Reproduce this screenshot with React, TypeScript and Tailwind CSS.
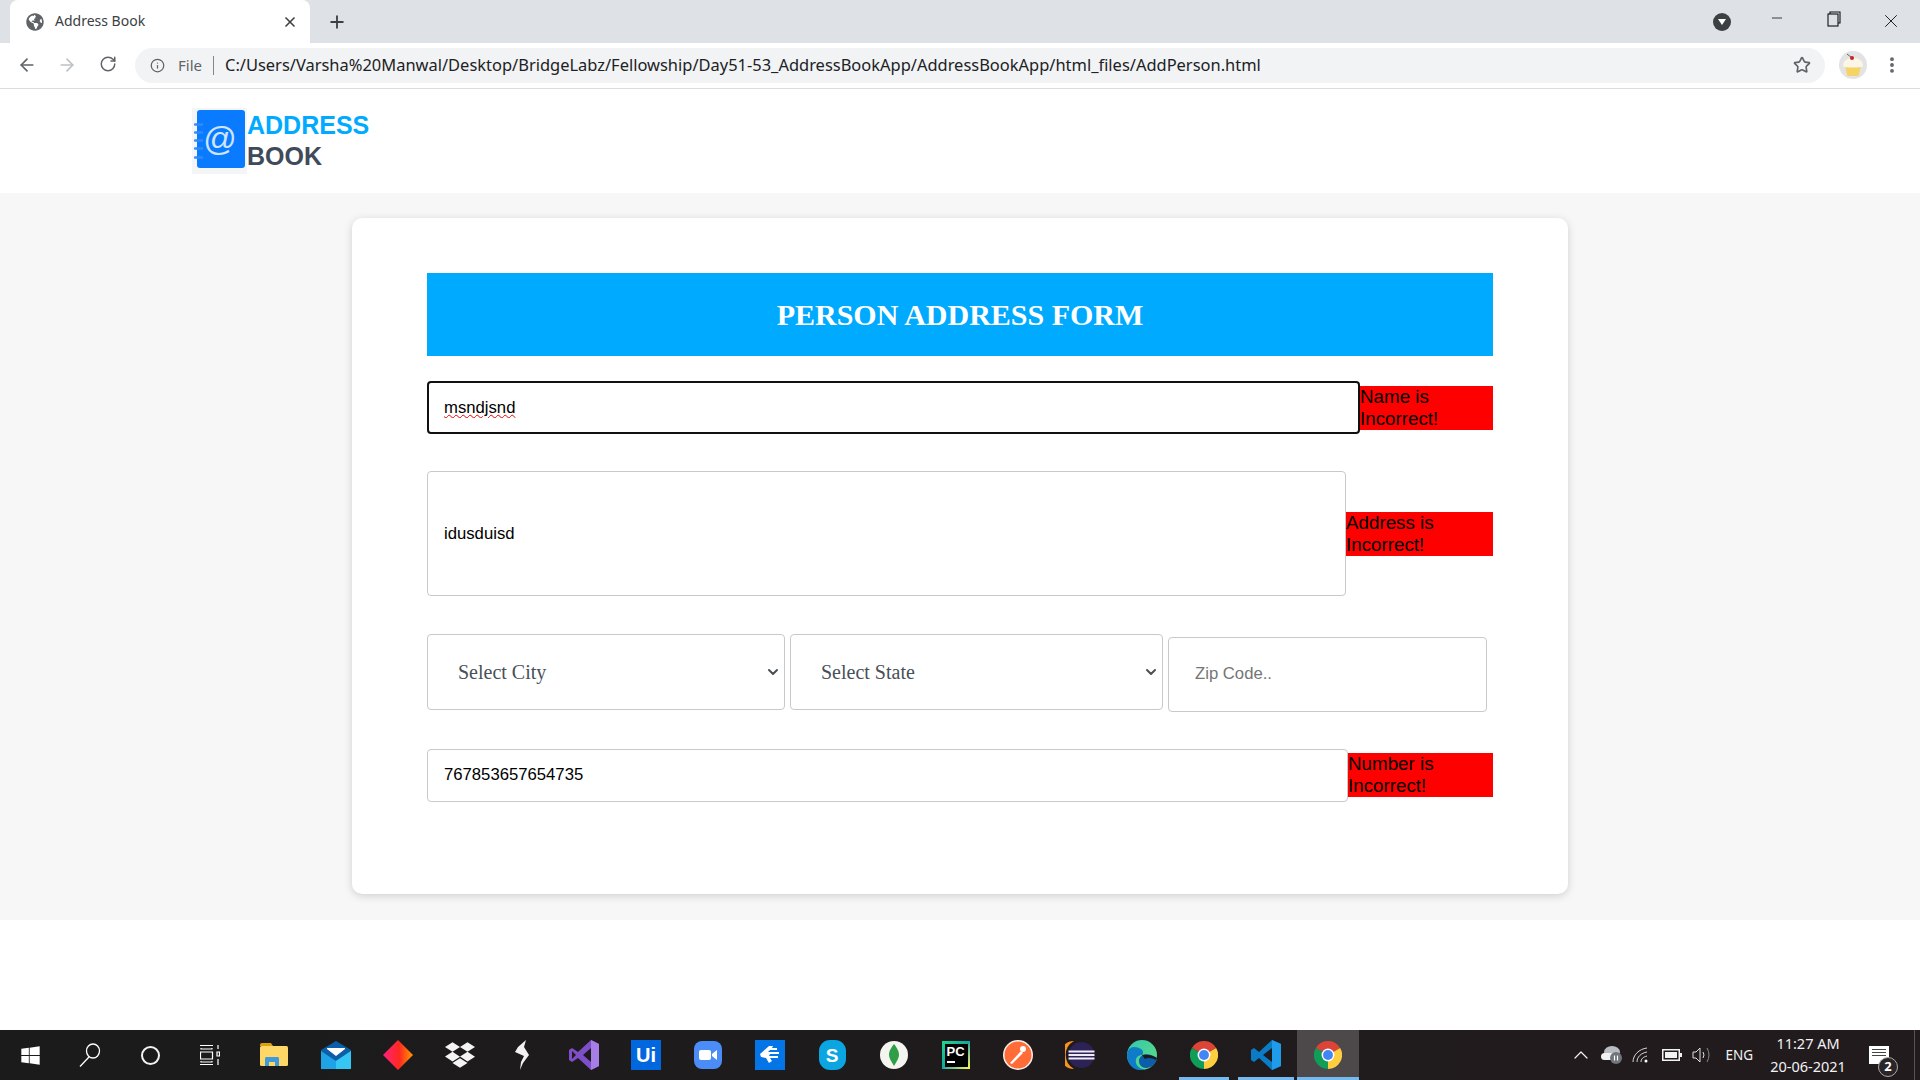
import { ArrowLeft, ArrowRight, ChevronDown, ChevronUp, EllipsisVertical, Info, Minus, Plus, RotateCw, Star, X } from 'lucide-react'
import { FaDropbox, FaGlobeAmericas, FaWindows } from 'react-icons/fa'

const arial = 'font-["Liberation_Sans",Arial,sans-serif]'

function ChromeLogo() {
  return (
    <svg width="28" height="28" viewBox="0 0 48 48">
      <path d="M24 24 L44.8 12 A24 24 0 0 0 3.2 12 Z" fill="#db4437" />
      <path d="M24 24 L3.2 12 A24 24 0 0 0 24 48 Z" fill="#0f9d58" />
      <path d="M24 24 L24 48 A24 24 0 0 0 44.8 12 Z" fill="#ffcd40" />
      <circle cx="24" cy="24" r="11" fill="#fff" />
      <circle cx="24" cy="24" r="8.5" fill="#4285f4" />
    </svg>
  )
}

function Logo() {
  return (
    <div className="relative h-[66px] w-[55px] bg-[#f4f5f6]">
      <div className={`absolute top-[2px] left-[5px] flex h-[58px] w-[48px] items-center justify-center rounded-[3px] bg-[#0a7bff] pr-[2px] text-[33px] text-[#cfe5ff] ${arial}`}>@</div>
      <svg width="9" height="36" viewBox="0 0 9 36" className="absolute top-[15px] left-[2px]">
        <path d="M1 1.500h8M1 9.500h8M1 17.500h8M1 25.500h8M1 34.500h8" stroke="#2f8cf5" strokeWidth="2.4" strokeLinecap="round" />
      </svg>
    </div>
  )
}

function Cupcake() {
  return (
    <svg width="28" height="28" viewBox="0 0 28 28" className="block">
      <circle cx="14" cy="14" r="14" fill="#e3e3e3" />
      <path d="M6 15h16l-2.500 10h-11z" fill="#f5d365" />
      <path d="M4 15c0-5 4-8 10-8s10 3 10 8c0 2-20 2-20 0z" fill="#fbf6e8" />
      <circle cx="13" cy="7" r="2" fill="#c8202c" />
      <path d="M12 6 8 3" stroke="#666" strokeWidth="1" />
    </svg>
  )
}

function Folder() {
  return (
    <svg width="28" height="24" viewBox="0 0 28 24">
      <path d="M0 2q0-2 2-2h9l2 3H0z" fill="#d9a112" />
      <rect y="3" width="28" height="20" rx="1.5" fill="#ffd766" />
      <path d="M5 23v-8l1-1h12l1 1v8h-4v-4H9v4z" fill="#3f9ad8" />
    </svg>
  )
}

function Mail() {
  return (
    <svg width="30" height="28" viewBox="0 0 30 28">
      <path d="M0 9 15 0l15 9v19H0z" fill="#0b5fa8" />
      <path d="M0 10l15 10 15-10v18H0z" fill="#1ea4e6" />
      <path d="M15 20 30 10v18H15z" fill="#35c6f4" />
      <path d="M6 7h18v1l-9 7-9-7z" fill="#fff" />
    </svg>
  )
}

function Diamond() {
  return (
    <svg width="30" height="30" viewBox="0 0 30 30">
      <defs>
        <linearGradient id="dm" x1="0" x2="1" y1="0" y2="0">
          <stop offset="0" stopColor="#ff1f7d" />
          <stop offset="0.55" stopColor="#ff2a1f" />
          <stop offset="1" stopColor="#ff9a00" />
        </linearGradient>
      </defs>
      <path d="M15 0 30 15 15 30 0 15z" fill="url(#dm)" />
    </svg>
  )
}

function Slash() {
  return (
    <svg width="14" height="30" viewBox="0 0 14 30">
      <path d="M11 0 9 7l5 8-6 8-3 7 1-8 3-6-9-4 3-5z" fill="#f2f2f2" />
    </svg>
  )
}

function VisualStudio() {
  return (
    <svg width="30" height="30" viewBox="0 0 30 30">
      <path d="M22 0 30 4v22l-8 4-13-12-6 4-3-2V10l3-2 6 4z" fill="#7f4fc9" />
      <path d="M22 8 14 15l8 7z" fill="#1e1a1d" />
      <path d="M3 11v8l4-4z" fill="#1e1a1d" />
      <path d="M22 0 30 4v22l-8 4z" fill="#a77ee6" />
    </svg>
  )
}

function ZoomApp() {
  return (
    <svg width="28" height="28" viewBox="0 0 28 28">
      <rect width="28" height="28" rx="8" fill="#4b8cf7" />
      <rect x="5" y="9" width="12" height="10" rx="2" fill="#fff" />
      <path d="M18 13l5-4v10l-5-4z" fill="#fff" />
    </svg>
  )
}

function Kite() {
  return (
    <svg width="30" height="30" viewBox="0 0 30 30">
      <rect width="30" height="30" fill="#0475e6" />
      <path d="M5 14 14 6h4l-1 2h5v2h-7l-2 2h11v2h-9l-1 2h9v2h-8l2 3-3 2-3-5-5-1z" fill="#fff" />
    </svg>
  )
}

function Skype() {
  return (
    <div className={`flex h-[30px] w-[27px] items-center justify-center rounded-[11px] bg-[#0ba6e2] text-[19px] leading-none font-bold text-white ${arial}`}>S</div>
  )
}

function Mongo() {
  return (
    <svg width="28" height="28" viewBox="0 0 28 28">
      <circle cx="14" cy="14" r="14" fill="#f5f5f0" />
      <path d="M14 3c4 5 5 8 5 11s-2 6-5 11c-3-5-5-8-5-11s1-6 5-11z" fill="#2f9e46" />
    </svg>
  )
}

function PyCharm() {
  return (
    <div className="relative h-7 w-7 bg-gradient-to-br from-[#21d789] via-[#15a5a0] to-[#fcf84a] p-[2.5px]">
      <div className={`h-full w-full bg-black pl-[2px] text-[13px] leading-[15px] font-bold text-white ${arial}`}>
        PC
        <div className="mt-[2px] h-[2px] w-[8px] bg-white" />
      </div>
    </div>
  )
}

function Postman() {
  return (
    <svg width="30" height="30" viewBox="0 0 30 30">
      <circle cx="15" cy="15" r="15" fill="#f5f0ec" />
      <circle cx="15" cy="15" r="13.5" fill="#ff6c37" />
      <path d="M7 23 18 11l2 2L9 24z" fill="#fff" />
      <circle cx="20" cy="9" r="3" fill="#fff" />
    </svg>
  )
}

function Eclipse() {
  return (
    <svg width="30" height="30" viewBox="0 0 30 30">
      <path d="M9 1A14 14 0 0 0 9 29 16 16 0 0 1 9 1z" fill="#f7941e" />
      <circle cx="16.5" cy="15" r="13" fill="#2c2255" />
      <path d="M3.5 10.5h26v2h-26zM3.5 14h26v2h-26zM3.5 17.500h26v2h-26z" fill="#eeeaf6" />
    </svg>
  )
}

function Edge() {
  return (
    <svg width="30" height="30" viewBox="0 0 30 30">
      <defs>
        <linearGradient id="eg" x1="0" x2="1" y1="0" y2="1">
          <stop offset="0" stopColor="#34c6b0" />
          <stop offset="1" stopColor="#5fe07c" />
        </linearGradient>
      </defs>
      <circle cx="15" cy="15" r="15" fill="url(#eg)" />
      <path d="M0 15C1 5 9 6 14 9c3 2 2 5 1 6-4 0-7 3-6 8 1 4 6 7 11 6C9 33 0 26 0 15z" fill="#0f7cc8" />
      <path d="M12 21c0-5 6-8 12-6 4 1 6 3 6 4-2 7-8 9-11 9-4 0-7-3-7-7z" fill="#0c5ea8" />
      <path d="M15 15c5-1 10 0 15 3l-1 2c-3-2-8-3-11-1z" fill="#1d1a1c" />
    </svg>
  )
}

function VsCode() {
  return (
    <svg width="30" height="30" viewBox="0 0 30 30">
      <path d="M21 0 30 4v22l-9 4L8 18l-5 4-3-2v-10l3-2 5 4z" fill="#0a7cc6" />
      <path d="M21 8 12 15l9 7z" fill="#1e1a1d" />
      <path d="M21 0 30 4v22l-9 4z" fill="#1e9bea" />
    </svg>
  )
}

const apps = [
  { key: 'explorer', icon: <Folder /> },
  { key: 'mail', icon: <Mail /> },
  { key: 'diamond', icon: <Diamond /> },
  { key: 'dropbox', icon: <FaDropbox size={30} color="#f4f4f4" /> },
  { key: 'slash', icon: <Slash /> },
  { key: 'vs', icon: <VisualStudio /> },
  { key: 'ui', icon: <div className={`flex h-[30px] w-[30px] items-center justify-center bg-[#0067df] text-[20px] font-bold text-white ${arial}`}>Ui</div> },
  { key: 'zoom', icon: <ZoomApp /> },
  { key: 'kite', icon: <Kite /> },
  { key: 'skype', icon: <Skype /> },
  { key: 'mongo', icon: <Mongo /> },
  { key: 'pycharm', icon: <PyCharm /> },
  { key: 'postman', icon: <Postman /> },
  { key: 'eclipse', icon: <Eclipse /> },
  { key: 'edge', icon: <Edge /> },
  { key: 'chrome', icon: <ChromeLogo />, line: 'mx-[6px] bg-[#76b9ed]' },
  { key: 'vscode', icon: <VsCode />, line: 'mx-[3px] bg-[#76b9ed]' },
  { key: 'chrome-active', icon: <ChromeLogo />, line: 'bg-[#76b9ed]', active: true },
]

function BrowserBar() {
  return (
    <div className="shrink-0 font-['Noto_Sans',sans-serif]">
      <div className="flex h-[43px] items-end bg-[#dee1e6] pl-[10px]">
        <div className="flex h-[43px] w-[300px] items-center rounded-t-[8px] bg-white pr-[12px] pl-[16px]">
          <FaGlobeAmericas size={18} color="#5f6368" />
          <span className="ml-[11px] flex-1 pb-[2px] text-[14px] text-[#3c4043]">Address Book</span>
          <X size={16} strokeWidth={2.5} color="#3c4043" />
        </div>
        <div className="ml-[17px] flex h-[43px] items-center">
          <Plus size={20} strokeWidth={2.2} color="#3c4043" />
        </div>
        <div className="ml-auto flex h-[43px] items-start pr-[1px]">
          <div className="mt-[13px] mr-[17px] flex h-[18px] w-[18px] items-center justify-center rounded-full bg-[#3c4043]">
            <div className="h-0 w-0 border-x-[4px] border-t-[6px] border-x-transparent border-t-white" />
          </div>
          <div className="flex w-[57px] justify-center pt-[10px]"><Minus size={16} strokeWidth={1.2} color="#111" /></div>
          <div className="flex w-[57px] justify-center pt-[11px]">
            <svg width="14" height="16" viewBox="0 0 14 16" fill="none" stroke="#111" strokeWidth="1.1">
              <rect x="1" y="3" width="10" height="12" />
              <path d="M3 3V1h10v11h-2" />
            </svg>
          </div>
          <div className="flex w-[57px] justify-center pt-[10px]"><X size={22} strokeWidth={1} color="#111" /></div>
        </div>
      </div>
      <div className="flex h-[46px] items-center border-b border-[#dcdcdc] bg-white pb-[1px]">
        <div className="flex w-[135px] pl-[17px]">
          <ArrowLeft size={20} color="#5f6368" />
          <ArrowRight size={20} color="#bdc1c6" className="ml-[20px]" />
          <RotateCw size={18} color="#5f6368" className="ml-[22px]" />
        </div>
        <div className="flex h-[35px] w-[1690px] items-center rounded-full bg-[#f1f3f4] pr-[14px] pl-[15px] text-[#3c4043]">
          <Info size={15} color="#5f6368" />
          <span className="ml-[13px] text-[15px] text-[#5f6368]">File</span>
          <div className="mx-[11px] h-[19px] w-px bg-[#80868b]" />
          <span className="text-[16.47px] whitespace-nowrap text-[#202124]">C:/Users/Varsha%20Manwal/Desktop/BridgeLabz/Fellowship/Day51-53_AddressBookApp/AddressBookApp/html_files/AddPerson.html</span>
          <Star size={18} strokeWidth={2.2} color="#5f6368" className="ml-auto" />
        </div>
        <div className="ml-[14px]"><Cupcake /></div>
        <EllipsisVertical size={20} strokeWidth={2.6} color="#5f6368" className="ml-[15px]" />
      </div>
    </div>
  )
}

function ErrorText({ children, lifted }: { children: string; lifted?: boolean }) {
  return <div className={`h-[44px] min-w-0 flex-1 bg-[#ff0000] text-[18.8px] leading-[22px] text-black ${arial} ${lifted ? 'mb-px' : 'mt-px'}`}>{children}</div>
}

function SelectBox({ width, label }: { width: string; label: string }) {
  return (
    <div className={`relative h-[76px] ${width}`}>
      <select defaultValue={label} className="h-full w-full appearance-none rounded-[4px] border border-[#c9c9c9] bg-white pl-[30px] font-['Liberation_Serif',serif] text-[20px] text-[#495057] outline-none">
        <option value={label}>{label}</option>
      </select>
      <ChevronDown size={16} strokeWidth={3} color="#495057" className="pointer-events-none absolute top-[30px] right-[4px]" />
    </div>
  )
}

function PersonForm() {
  return (
    <div className={`mx-auto w-[1216px] rounded-[10px] bg-white px-[75px] pt-[55px] pb-[92px] shadow-[0_2px_8px_rgba(0,0,0,0.16)] ${arial}`}>
      <div className="mb-[25px] flex h-[83px] w-[1066px] items-center justify-center bg-[#00aaff] font-['Liberation_Serif',serif] text-[30px] font-bold text-white">
        PERSON ADDRESS FORM
      </div>

      <div className="mb-[37px] flex h-[53px] w-[1066px] items-center">
        <input readOnly spellCheck={false} value="msndjsnd" className="h-[53px] w-[933px] rounded-[4px] border-2 border-[#101010] pl-[15px] text-[16.7px] text-black underline decoration-[#f00000] decoration-wavy decoration-1 outline-none" />
        <ErrorText>Name is Incorrect!</ErrorText>
      </div>

      <div className="mb-[38px] flex h-[125px] w-[1066px] items-center">
        <input readOnly value="idusduisd" className="h-[125px] w-[919px] rounded-[4px] border border-[#c9c9c9] pl-[16px] text-[16.7px] text-black outline-none" />
        <ErrorText>Address is Incorrect!</ErrorText>
      </div>

      <div className="mb-[37px] flex h-[78px] items-start gap-[5px]">
        <SelectBox width="w-[358px]" label="Select City" />
        <SelectBox width="w-[373px]" label="Select State" />
        <input readOnly placeholder="Zip Code.." className="mt-[3px] h-[75px] w-[319px] rounded-[4px] border border-[#c9c9c9] pb-[2px] pl-[26px] text-[16.7px] outline-none placeholder:text-[#757575]" />
      </div>

      <div className="flex h-[53px] w-[1066px] items-center">
        <input readOnly value="767853657654735" className="h-[53px] w-[921px] rounded-[4px] border border-[#c9c9c9] pb-[2px] pl-[16px] text-[16.7px] text-black outline-none" />
        <ErrorText lifted>Number is Incorrect!</ErrorText>
      </div>
    </div>
  )
}

function Taskbar() {
  return (
    <div className="flex h-[50px] shrink-0 items-stretch bg-gradient-to-r from-[#1b1b1b] to-[#221b1e] font-['Noto_Sans',sans-serif] text-[#f2f2f2]">
      <div className="flex w-[60px] items-center justify-center"><FaWindows size={21} color="#fff" /></div>
      <div className="flex w-[60px] items-center justify-center">
        <svg width="22" height="24" viewBox="0 0 22 24" fill="none" stroke="#fff" strokeWidth="1.3">
          <ellipse cx="14" cy="8" rx="6.500" ry="7" />
          <path d="M10 14 1 23.500" />
        </svg>
      </div>
      <div className="flex w-[60px] items-center justify-center">
        <div className="h-[19px] w-[19px] rounded-full border-[2.5px] border-[#f2f2f2]" />
      </div>
      <div className="flex w-[60px] items-center justify-center">
        <svg width="20" height="20" viewBox="0 0 20 20" fill="none" stroke="#fff" strokeWidth="1.2">
          <path d="M0 .5h13M0 19.500h13M1 3v1h11V3M.5 7h12v7H.5zM1 16v1h11v-1" />
          <path d="M18 0v4M18 7h1.500v4H17V7zM18 14v6" />
        </svg>
      </div>
      <div className="ml-[3px] flex">
        {apps.map((app) => (
          <div key={app.key} className={`relative flex w-[62px] items-center justify-center ${app.active ? 'bg-[#4d4849]' : ''}`}>
            {app.icon}
            {app.line ? <div className={`absolute inset-x-0 bottom-0 h-[3px] ${app.line}`} /> : null}
          </div>
        ))}
      </div>
      <div className="ml-auto flex items-center pr-[5px]">
        <ChevronUp size={24} strokeWidth={1.2} color="#f2f2f2" />
        <svg width="22" height="20" viewBox="0 0 22 20" className="ml-[8px]">
          <ellipse cx="11" cy="7" rx="8" ry="6" fill="#b9bdc2" />
          <rect y="8" width="14" height="7" rx="3.500" fill="#f2f2f2" />
          <circle cx="15" cy="13" r="6" fill="#70757a" />
          <path d="M13.500 10.500v5M16.500 10.500v5" stroke="#fff" strokeWidth="1.2" />
        </svg>
        <svg width="18" height="16" viewBox="0 0 18 16" fill="none" stroke="#d8d8d8" strokeWidth="1" className="ml-[9px]">
          <path d="M1 15C1 8 7 2 15 1M5 15c0-5 4-9 10-10M9 15c0-3 2-5 6-6" />
          <circle cx="14" cy="14" r="1.500" fill="#fff" stroke="none" />
        </svg>
        <svg width="20" height="12" viewBox="0 0 20 12" className="ml-[12px]">
          <rect x=".75" y=".75" width="16.500" height="10.500" fill="none" stroke="#f2f2f2" strokeWidth="1.500" />
          <rect x="3" y="3" width="12" height="6" fill="#f2f2f2" />
          <rect x="18" y="4" width="2" height="4" fill="#f2f2f2" />
        </svg>
        <svg width="20" height="16" viewBox="0 0 20 16" fill="none" stroke="#e0e0e0" strokeWidth="1" className="ml-[10px]">
          <path d="M1 5h3l4-4v14l-4-4H1z" />
          <path d="M11 5q2 3 0 6" />
          <path d="M15 1q4 7 0 14" stroke="#888" />
        </svg>
        <span className="ml-[13px] text-[13.5px]">ENG</span>
        <div className="ml-[15px] w-[80px] text-center text-[14.500px] leading-[23px]">
          <div>11:27 AM</div>
          <div>20-06-2021</div>
        </div>
        <div className="relative mr-[25px] ml-[21px] h-[18px] w-[20px] bg-white pt-[3px]">
          <div className="mx-[3px] mb-[2px] h-px bg-[#444]" />
          <div className="mx-[3px] mb-[2px] h-px bg-[#444]" />
          <div className="mx-[3px] h-px bg-[#444]" />
          <div className="absolute top-[11px] left-[9px] flex h-[20px] w-[20px] items-center justify-center rounded-full border border-[#aaa] bg-[#2a2528] text-[13px] font-bold text-white">2</div>
        </div>
        <div className="h-full w-px bg-[#555]" />
      </div>
    </div>
  )
}

export default function App() {
  return (
    <div className="flex h-screen w-full flex-col overflow-hidden bg-white">
      <BrowserBar />

      <div className="flex-1">
        <div className="flex h-[104px] items-start bg-white pt-[19px] pl-[192px]">
          <Logo />
          <div className={`pt-[2px] text-[25px] leading-[31px] font-bold ${arial}`}>
            <div className="text-[#00aaff]">ADDRESS</div>
            <div className="text-[#3f4a5a]">BOOK</div>
          </div>
        </div>
        <div className="bg-[#f7f7f7] pt-[25px] pb-[26px]">
          <PersonForm />
        </div>
      </div>

      <Taskbar />
    </div>
  )
}
